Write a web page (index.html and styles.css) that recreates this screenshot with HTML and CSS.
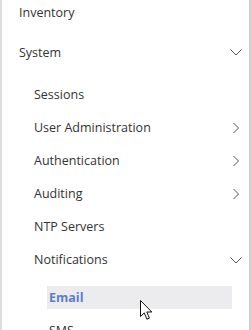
FILE: index.html
```html
<!doctype html>
<html lang="en">
<head>
    <meta charset="UTF-8" />
    <meta name="viewport" content="width=device-width, initial-scale=1.0" />
    <title>Navigation</title>
    <link rel="stylesheet" href="styles.css">
</head>
<body>
    <nav class="sidebar">
        <ul class="menu">
            <li class="menu-item">
                <a class="menu-link" href="#">Inventory</a>
            </li>
            <li class="menu-item open">
                <a class="menu-link" href="#">
                    System
                    <svg class="chevron" viewBox="0 0 12 12"><path d="M0.5 3.5 L6 9 L11.5 3.5" /></svg>
                </a>
                <ul class="submenu">
                    <li><a class="sub-link" href="#">Sessions</a></li>
                    <li>
                        <a class="sub-link" href="#">
                            User Administration
                            <svg class="chevron" viewBox="0 0 12 12"><path d="M3.5 1 L8.5 6 L3.5 11" /></svg>
                        </a>
                    </li>
                    <li>
                        <a class="sub-link" href="#">
                            Authentication
                            <svg class="chevron" viewBox="0 0 12 12"><path d="M3.5 1 L8.5 6 L3.5 11" /></svg>
                        </a>
                    </li>
                    <li>
                        <a class="sub-link" href="#">
                            Auditing
                            <svg class="chevron" viewBox="0 0 12 12"><path d="M3.5 1 L8.5 6 L3.5 11" /></svg>
                        </a>
                    </li>
                    <li><a class="sub-link" href="#">NTP Servers</a></li>
                    <li class="open">
                        <a class="sub-link" href="#">
                            Notifications
                            <svg class="chevron" viewBox="0 0 12 12"><path d="M0.5 3.5 L6 9 L11.5 3.5" /></svg>
                        </a>
                        <ul class="leaf-menu">
                            <li><a class="leaf-link active" href="#">Email</a></li>
                            <li><a class="leaf-link" href="#">SMS</a></li>
                        </ul>
                    </li>
                </ul>
            </li>
        </ul>

        <!-- mouse pointer over the hovered item -->
        <svg class="cursor" viewBox="0 0 13 21" width="13" height="21">
            <path d="M0.5 0.5 L0.5 16.5 L4.3 12.9 L6.9 19.2 L9.4 18.1 L6.8 12 L11.8 12 Z" fill="#fff" stroke="#111" stroke-width="1" stroke-linejoin="round" />
        </svg>
    </nav>
</body>
</html>
```

FILE: styles.css
```css
* {
    margin: 0;
    padding: 0;
    box-sizing: border-box;
}

body {
    font-family: "Open Sans", "Noto Sans", sans-serif;
    font-size: 12.5px;
    color: #333;
    background: white;
}

.sidebar {
    position: relative;
    width: 251px;
    height: 330px;
    overflow: hidden;
    border-left: 2px solid #dcdcdc;
    border-right: 2px solid #cfcfcf;
}

ul {
    list-style: none;
}

.menu {
    margin-top: -8px;
}

a {
    color: inherit;
    text-decoration: none;
}

.menu-link,
.sub-link {
    display: flex;
    align-items: center;
    justify-content: space-between;
    padding-right: 7px;
}

.menu-link {
    height: 40px;
    padding-left: 17px;
}

.submenu {
    padding-top: 6px;
}

.sub-link {
    height: 33px;
    padding-left: 32px;
}

.chevron {
    width: 12px;
    height: 12px;
    fill: none;
    stroke: #555;
    stroke-width: 1;
}

.leaf-menu {
    display: flex;
    flex-direction: column;
    gap: 10px;
    padding-top: 10px;
    padding-left: 45px;
    padding-right: 17px;
}

.leaf-link {
    display: flex;
    align-items: center;
    height: 23px;
    padding-left: 2px;
}

.leaf-link.active {
    background: #ececef;
    color: #5b7fc8;
    font-weight: 700;
}

.cursor {
    position: absolute;
    left: 138px;
    top: 300px;
}
```
